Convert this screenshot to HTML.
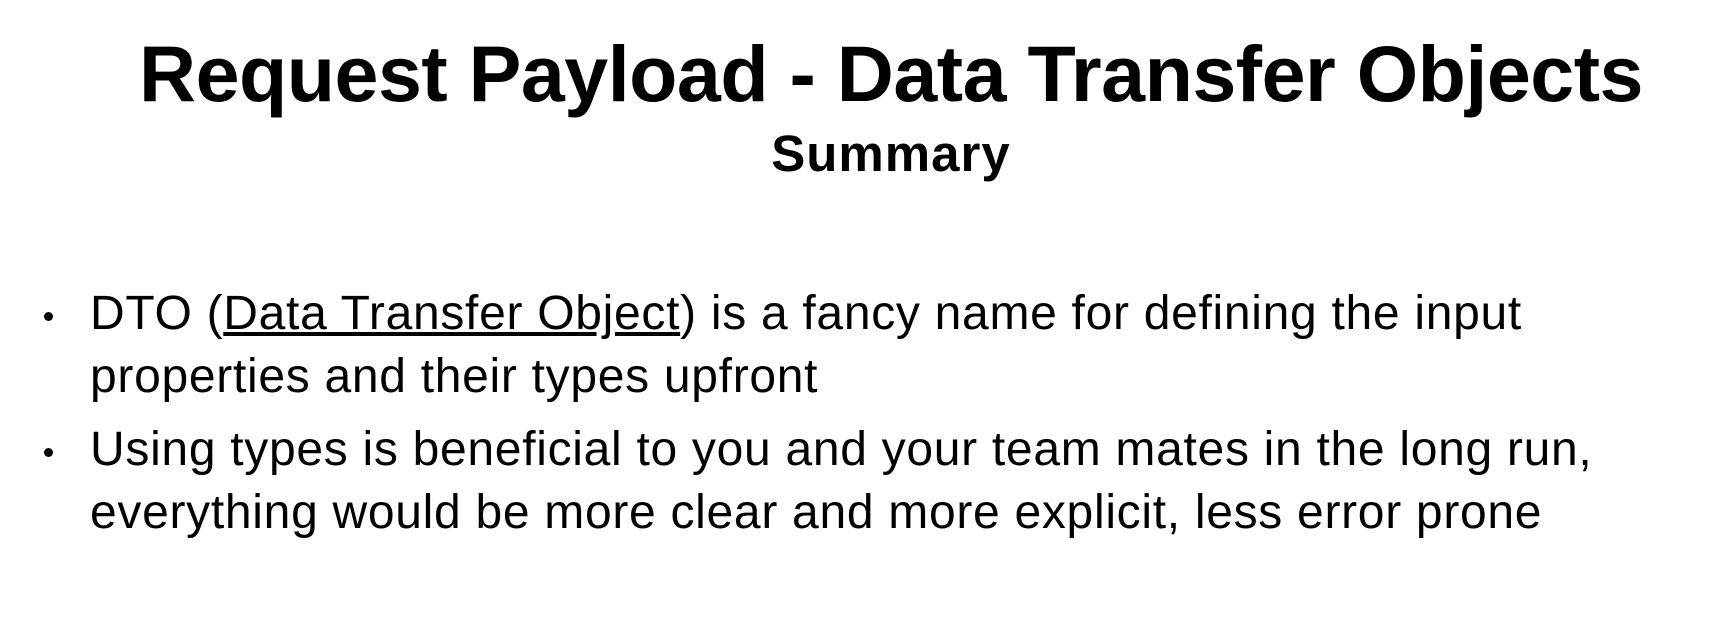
<!DOCTYPE html>
<html><head><style>
html,body{margin:0;padding:0;background:#fff;width:1722px;height:638px;overflow:hidden;font-family:"Liberation Sans",sans-serif;color:#000}
h1{position:absolute;left:0;width:1722px;top:28px;margin:0;text-align:center;font-size:79px;font-weight:bold;letter-spacing:-0.5px;white-space:nowrap;padding-left:60px;box-sizing:border-box}
h2{position:absolute;left:0;width:1722px;top:124px;margin:0;text-align:center;font-size:51px;font-weight:bold;padding-left:60px;box-sizing:border-box;letter-spacing:1px}
ul{position:absolute;left:0;top:282px;margin:0;padding:0;list-style:none;font-size:48px;line-height:63px;letter-spacing:0.7px}
li{position:relative;padding-left:90px;margin-bottom:10px;width:1620px;white-space:nowrap}
li:before{content:"";position:absolute;left:44px;top:30px;width:9px;height:9px;border-radius:50%;background:#000}
</style></head><body>
<h1>Request Payload - Data Transfer Objects</h1>
<h2>Summary</h2>
<ul>
<li>DTO (<u>Data Transfer Object</u>) is a fancy name for defining the input<br>properties and their types upfront</li>
<li>Using types is beneficial to you and your team mates in the long run,<br>everything would be more clear and more explicit, less error prone</li>
</ul>
</body></html>
